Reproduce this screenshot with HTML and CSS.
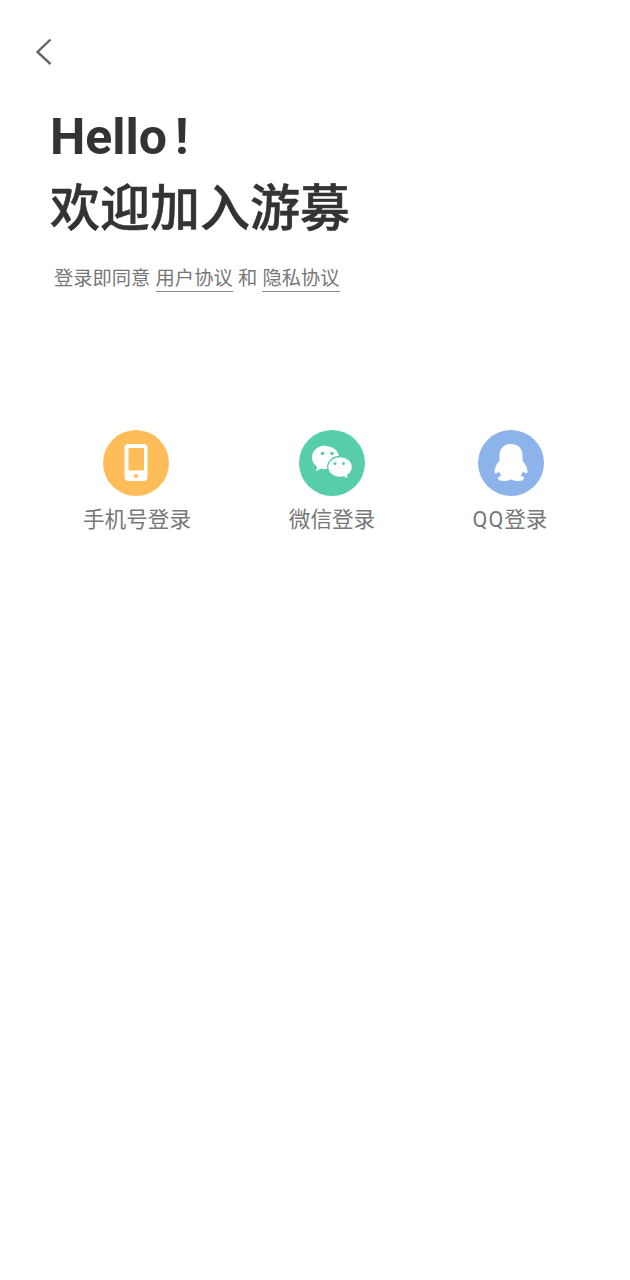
FILE: index.html
```html
<!DOCTYPE html>
<html lang="zh">
<head>
<meta charset="utf-8">
<title>欢迎加入游募</title>
<link rel="stylesheet" href="styles.css">
</head>
<body>
<main class="page">
  <svg class="back" width="18" height="28" viewBox="0 0 18 28"><path d="M15.5 1.500 L2.500 14 L15.500 26" fill="none" stroke="#666" stroke-width="2.400"/></svg>
  <h1 class="title"><span class="hello">Hello<span class="bang">!</span></span><span class="welcome">欢迎加入游募</span></h1>
  <p class="terms"><span>登录即同意</span><a class="link">用户协议</a><span>和</span><a class="link">隐私协议</a></p>
  <div class="logins">
    <div class="login phone">
      <span class="circle c-phone">
        <svg width="66" height="66" viewBox="0 0 66 66"><rect x="21.500" y="14" width="23" height="37" rx="4" fill="#fff"/><rect x="25.500" y="18" width="15.500" height="22.500" rx="1" fill="#ffbd59"/><circle cx="33" cy="46" r="2" fill="#ffbd59"/></svg>
      </span>
      <span class="label">手机号登录</span>
    </div>
    <div class="login wechat">
      <span class="circle c-wechat">
        <svg width="66" height="66" viewBox="0 0 66 66"><path d="M26.500 15.500C18.900 15.500 13 20.800 13 27.500c0 3.800 1.900 7 5 9.200l-1 4.600 5-2.800c1.400.4 2.900.6 4.500.6 7.600 0 13.500-5.200 13.500-11.600s-5.900-11.500-13.500-11.500z" fill="#fff"/><circle cx="23.500" cy="23.500" r="1.800" fill="#57cdab"/><circle cx="33" cy="23.500" r="1.800" fill="#57cdab"/><path d="M41 26.500c-6.800 0-12.300 4.700-12.300 10.500S34.200 47.500 41 47.500c1.400 0 2.700-.2 3.900-.6l4.800 2.600-1.100-4.200c2.900-1.900 4.800-4.900 4.800-8.300 0-5.800-5.600-10.500-12.400-10.500z" fill="#fff" stroke="#57cdab" stroke-width="1.300"/><circle cx="36" cy="33.500" r="1.500" fill="#57cdab"/><circle cx="44.500" cy="33.500" r="1.500" fill="#57cdab"/></svg>
      </span>
      <span class="label">微信登录</span>
    </div>
    <div class="login qq">
      <span class="circle c-qq">
        <svg width="66" height="66" viewBox="0 0 66 66"><path d="M33 14C25.500 14 21.500 19 21.500 25.500V30.500C19 33.500 16.500 37.500 16.500 41.500C16.500 43.500 17.500 44 19 43L21 41.500C21.600 43 22.500 44.500 23.500 45.500C21.500 46.200 20 47.300 20 48.500C20 50.200 23 51 26.500 51C29 51 31 50.400 32.500 49.500H33.500C35 50.400 37 51 39.500 51C43 51 46 50.200 46 48.500C46 47.300 44.500 46.200 42.500 45.500C43.500 44.500 44.400 43 45 41.500L47 43C48.500 44 49.500 43.500 49.500 41.500C49.500 37.500 47 33.500 44.500 30.500V25.500C44.500 19 40.500 14 33 14Z" fill="#fff"/></svg>
      </span>
      <span class="label"><span class="latin">QQ</span>登录</span>
    </div>
  </div>
</main>
</body>
</html>
```
FILE: styles.css
```css
* { box-sizing: border-box; }
html, body { margin: 0; background: #fff; }
.page {
  width: 630px;
  height: 1280px;
  padding: 38px 0 0 35px;
  font-family: Roboto, "Noto Sans CJK SC", sans-serif;
  overflow: hidden;
}
.back { display: block; }
.title {
  margin: 36px 0 0 15px;
  color: #333;
  font-size: 50px;
  line-height: 70px;
  font-weight: 700;
}
.hello, .welcome { display: block; }
.welcome {
  margin-top: 2px;
  font-weight: 500;
  -webkit-text-stroke: 0.5px #333;
}
.bang { margin-left: 8px; }
.terms {
  display: flex;
  gap: 5.2px;
  margin: 22px 0 0 19px;
  color: #777;
  font-size: 19.3px;
  line-height: 25px;
}
.link {
  border-bottom: 1px solid #888;
}
.logins {
  display: flex;
  margin: 138px 0 0;
}
.login {
  display: flex;
  flex-direction: column;
  align-items: center;
  gap: 7px;
}
.phone { margin-left: 47px; width: 108px; }
.wechat { margin-left: 98px; width: 88px; }
.qq { margin-left: 96px; width: 78px; }
.phone .label { margin-left: 2px; }
.qq .label { margin-left: -2px; }
.circle {
  display: block;
  width: 66px;
  height: 66px;
  border-radius: 50%;
}
.circle svg { display: block; }
.c-phone { background: #ffbd59; }
.c-wechat { background: #57cdab; }
.c-qq { background: #8db4ea; }
.label {
  color: #777;
  font-size: 21.6px;
  line-height: 34px;
  white-space: nowrap;
}
.latin { letter-spacing: 1px; }
```
